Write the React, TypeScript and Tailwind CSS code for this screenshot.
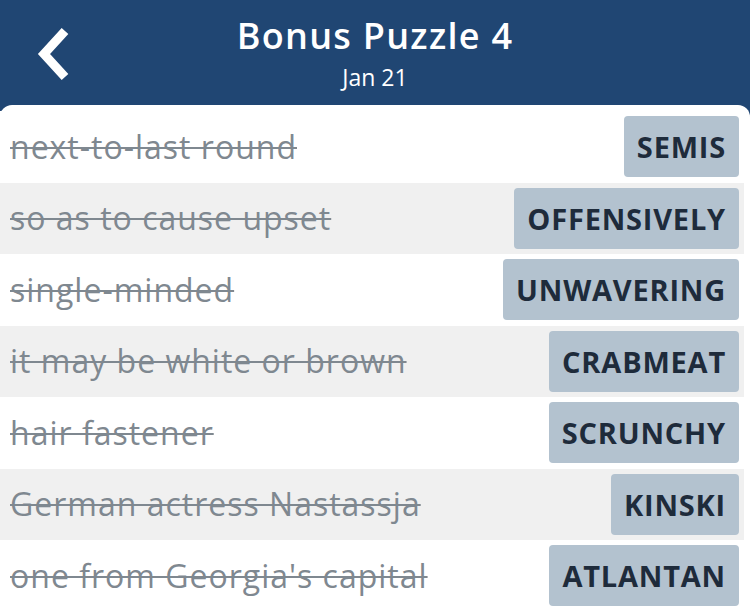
const rows = [
  { clue: 'next-to-last round', answer: 'SEMIS' },
  { clue: 'so as to cause upset', answer: 'OFFENSIVELY' },
  { clue: 'single-minded', answer: 'UNWAVERING' },
  { clue: 'it may be white or brown', answer: 'CRABMEAT' },
  { clue: 'hair fastener', answer: 'SCRUNCHY' },
  { clue: 'German actress Nastassja', answer: 'KINSKI' },
  { clue: "one from Georgia's capital", answer: 'ATLANTAN' },
];

export default function App() {
  return (
    <div
      className="w-[750px] h-[610px] overflow-hidden bg-[#204673]"
      style={{ fontFamily: '"Open Sans", "Noto Sans", sans-serif' }}
    >
      {/* Header */}
      <header className="h-[105px] flex items-start relative">
        <button className="absolute left-[33px] top-[25px] w-[40px] h-[58px] flex items-center justify-center">
          <svg width="36" height="56" viewBox="0 0 36 56">
            <polyline
              points="30,5 9,28 30,51"
              fill="none"
              stroke="white"
              strokeWidth="9"
            />
          </svg>
        </button>
        <div className="flex-1 flex flex-col items-center text-white pt-[12px]">
          <h1 className="text-[36px] font-semibold leading-[48px] tracking-[1.3px]">Bonus Puzzle 4</h1>
          <span className="text-[23px] leading-[30px] mt-[2px]">Jan 21</span>
        </div>
      </header>

      {/* List */}
      <main className="bg-white rounded-t-[12px] pt-[6px] pr-[6px] h-[505px]">
        {rows.map((r, i) => (
          <div
            key={r.clue}
            className={`h-[71.5px] flex items-center justify-between pl-[10px] pr-[5px] ${
              i % 2 === 1 ? 'bg-[#f0f0f0]' : 'bg-white'
            }`}
          >
            <span className="text-[32px] text-[#7f8890] line-through decoration-[2px] tracking-[1px]">
              {r.clue}
            </span>
            <span className="h-[61px] px-[13px] flex items-center rounded-[4px] bg-[#b3c2cf] text-[#1e2b3b] text-[29px] font-bold tracking-[0.8px]">
              {r.answer}
            </span>
          </div>
        ))}
      </main>
    </div>
  );
}
